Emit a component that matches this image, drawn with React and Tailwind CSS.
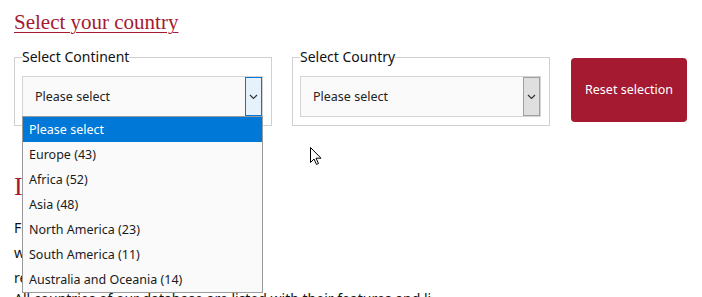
import React from 'react';

const continents = [
  'Please select',
  'Europe (43)',
  'Africa (52)',
  'Asia (48)',
  'North America (23)',
  'South America (11)',
  'Australia and Oceania (14)',
];

const Chevron = () => (
  <svg width="9" height="6" viewBox="0 0 9 6" fill="none">
    <path d="M1 1l3.5 3.5L8 1" stroke="#333" strokeWidth="1.2" />
  </svg>
);

const SelectBox = ({ focused }) => (
  <div className="flex h-[41px] w-[241px] items-stretch border border-[#d4d4d4] bg-[#fafafa]">
    <div className="flex flex-1 items-center pl-[12px] pt-[1px] text-[12.5px] text-[#222]">Please select</div>
    <div
      className={
        focused
          ? 'flex w-[17px] items-center justify-center border border-[#0078d7] bg-[#e5f1fb]'
          : 'flex w-[17px] items-center justify-center border border-[#a0a0a0] bg-[#dfdfdf]'
      }
    >
      <Chevron />
    </div>
  </div>
);

const Box = ({ label, focused }) => (
  <fieldset className="m-0 w-[258px] border border-[#d0d0d0] px-[7px] pb-[8px] pt-[9px]">
    <legend className="px-0 text-[14px] leading-[20px] text-[#111]">{label}</legend>
    <SelectBox focused={focused} />
  </fieldset>
);

export default function App() {
  return (
    <div
      className="relative h-[297px] w-[702px] overflow-hidden bg-white"
      style={{ fontFamily: '"Noto Sans", "Open Sans", sans-serif' }}
    >
      <div className="px-[14px] pt-[10px]">
        <h2 className="font-['Liberation_Serif',serif] text-[21px] leading-[25px] text-[#a51931] underline underline-offset-[3px] decoration-1">
          Select your country
        </h2>

        <div className="mt-[12px] flex items-start">
          <Box label="Select Continent" focused />
          <div className="ml-[20px]">
            <Box label="Select Country" />
          </div>
          <button className="ml-[21px] mt-[11px] h-[64px] w-[116px] rounded-[4px] bg-[#a51931] text-[12.5px] text-white">
            Reset selection
          </button>
        </div>

        <h2 className="mt-[46px] font-['Liberation_Serif',serif] text-[26px] leading-[30px] text-[#a51931]">
          Info
        </h2>
        <div className="mt-[13px] text-[14px] leading-[25px] text-[#111]">
          <p>For all</p>
          <p>with</p>
          <p>results</p>
          <p className="-mt-[4px]">All countries of our database are listed with their features and li</p>
        </div>
      </div>

      {/* open dropdown list */}
      <div className="absolute left-[22px] top-[116px] w-[241px] border border-[#9a9a9a] bg-[#fafafa]">
        {continents.map((c, i) => (
          <div
            key={c}
            className={
              i === 0
                ? 'flex h-[25px] items-center bg-[#0078d7] pl-[6px] pt-[1px] text-[12.5px] text-white'
                : 'flex h-[25px] items-center pl-[6px] pt-[1px] text-[12.5px] text-[#1a1a1a]'
            }
          >
            {c}
          </div>
        ))}
      </div>

      {/* mouse pointer */}
      <svg className="absolute left-[310px] top-[147px]" width="12" height="19" viewBox="0 0 12 19">
        <path d="M0.5 0.5v15l3.5-3.5 2.5 5.5 2-1-2.5-5.3h5z" fill="white" stroke="black" strokeWidth="1" />
      </svg>
    </div>
  );
}
